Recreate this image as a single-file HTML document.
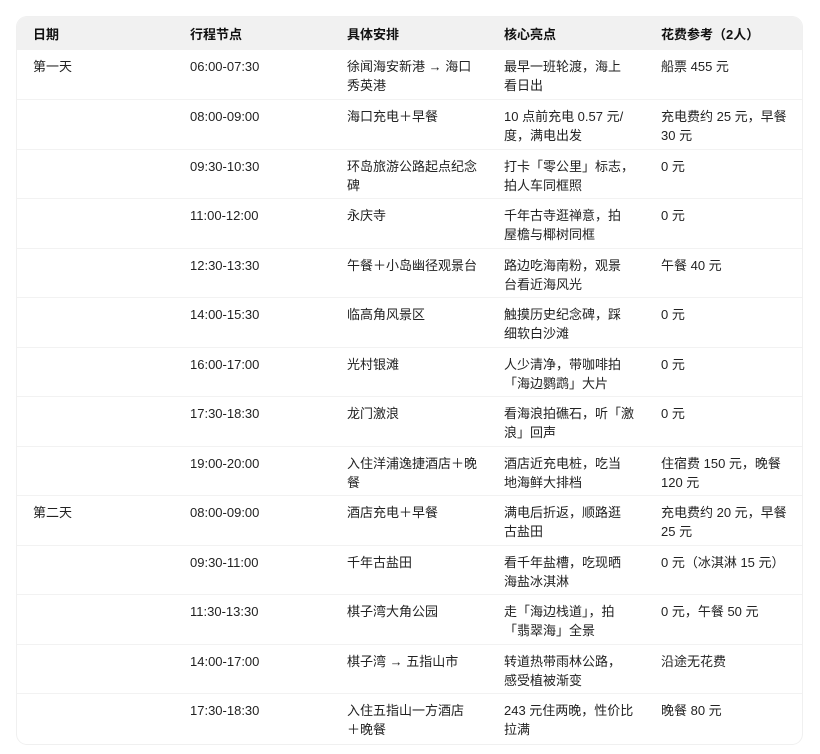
<!DOCTYPE html>
<html><head><meta charset="utf-8"><style>
body{margin:0;background:#fff;font-family:"Liberation Sans","Noto Sans CJK SC",sans-serif;color:#222;}
.wrap{position:absolute;left:17px;top:17px;width:785px;height:727px;border-radius:10px;overflow:hidden;box-shadow:0 0 0 1px #f0f0f0;}
table{border-collapse:collapse;width:785px;table-layout:fixed;font-size:13px;}
th{background:#f1f1f1;height:33px;text-align:left;font-weight:bold;padding:0 0 0 16px;font-size:13px;color:#111;}
td{height:49.5px;vertical-align:top;padding:7px 0 0 16px;line-height:19px;box-sizing:border-box;border-top:1px solid #f2f2f2;white-space:nowrap;}
tr:first-child td{border-top:none}
</style></head><body><div class="wrap"><table>
<colgroup><col style="width:157px"><col style="width:157px"><col style="width:157px"><col style="width:157px"><col style="width:157px"></colgroup>
<thead><tr><th>日期</th><th>行程节点</th><th>具体安排</th><th>核心亮点</th><th>花费参考（2人）</th></tr></thead>
<tbody>
<tr><td>第一天</td><td>06:00-07:30</td><td>徐闻海安新港 → 海口<br>秀英港</td><td>最早一班轮渡，海上<br>看日出</td><td>船票 455 元</td></tr>
<tr><td></td><td>08:00-09:00</td><td>海口充电＋早餐</td><td>10 点前充电 0.57 元/<br>度，满电出发</td><td>充电费约 25 元，早餐<br>30 元</td></tr>
<tr><td></td><td>09:30-10:30</td><td>环岛旅游公路起点纪念<br>碑</td><td>打卡「零公里」标志，<br>拍人车同框照</td><td>0 元</td></tr>
<tr><td></td><td>11:00-12:00</td><td>永庆寺</td><td>千年古寺逛禅意，拍<br>屋檐与椰树同框</td><td>0 元</td></tr>
<tr><td></td><td>12:30-13:30</td><td>午餐＋小岛幽径观景台</td><td>路边吃海南粉，观景<br>台看近海风光</td><td>午餐 40 元</td></tr>
<tr><td></td><td>14:00-15:30</td><td>临高角风景区</td><td>触摸历史纪念碑，踩<br>细软白沙滩</td><td>0 元</td></tr>
<tr><td></td><td>16:00-17:00</td><td>光村银滩</td><td>人少清净，带咖啡拍<br>「海边鹦鹉」大片</td><td>0 元</td></tr>
<tr><td></td><td>17:30-18:30</td><td>龙门激浪</td><td>看海浪拍礁石，听「激<br>浪」回声</td><td>0 元</td></tr>
<tr><td></td><td>19:00-20:00</td><td>入住洋浦逸捷酒店＋晚<br>餐</td><td>酒店近充电桩，吃当<br>地海鲜大排档</td><td>住宿费 150 元，晚餐<br>120 元</td></tr>
<tr><td>第二天</td><td>08:00-09:00</td><td>酒店充电＋早餐</td><td>满电后折返，顺路逛<br>古盐田</td><td>充电费约 20 元，早餐<br>25 元</td></tr>
<tr><td></td><td>09:30-11:00</td><td>千年古盐田</td><td>看千年盐槽，吃现晒<br>海盐冰淇淋</td><td>0 元（冰淇淋 15 元）</td></tr>
<tr><td></td><td>11:30-13:30</td><td>棋子湾大角公园</td><td>走「海边栈道」，拍<br>「翡翠海」全景</td><td>0 元，午餐 50 元</td></tr>
<tr><td></td><td>14:00-17:00</td><td>棋子湾 → 五指山市</td><td>转道热带雨林公路，<br>感受植被渐变</td><td>沿途无花费</td></tr>
<tr><td></td><td>17:30-18:30</td><td>入住五指山一方酒店<br>＋晚餐</td><td>243 元住两晚，性价比<br>拉满</td><td>晚餐 80 元</td></tr>
</tbody></table></div></body></html>
